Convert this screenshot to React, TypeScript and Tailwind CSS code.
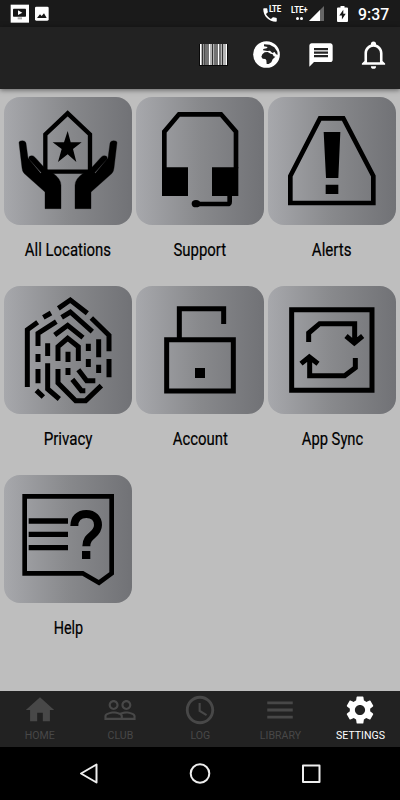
import type { ReactNode } from "react";
import { MdHome, MdPeopleOutline, MdAccessTime, MdMenu, MdSettings, MdMessage, MdPhone } from "react-icons/md";

type Tile = { label: string; fit: string; viewBox: string; art: ReactNode };

const tiles: Tile[] = [
  {
    label: "All Locations",
    fit: "scale-x-[0.83]",
    viewBox: "12 21 384 384",
    art: (
      <>
        <path d="M136 245V133L203 70L270 133V245Z" fill="none" stroke="#000" strokeWidth="13" />
        <path d="M203 123L212 157H245L219 177L229 216L203 193L174 216L185 177L158 157H192Z" />
        <path d="M57 158Q57 152 67 152Q77 152 78 160L84 204L122 250L124 248L87 207Q84 197 96 197Q101 197 106 203L136 236L161 251Q183 267 183 286V356H135V306L72 250Q67 244 66 234Z" stroke="#000" strokeWidth="1" />
        <path d="M351 158Q351 152 341 152Q331 152 330 160L324 204L286 250L284 248L321 207Q324 197 312 197Q307 197 302 203L272 236L248 251Q225 267 225 286V356H273V306L336 250Q341 244 342 234Z" stroke="#000" strokeWidth="1" />
      </>
    ),
  },
  {
    label: "Support",
    fit: "scale-x-[0.83]",
    viewBox: "12 21 384 384",
    art: (
      <>
        <path d="M97 235V125L141 73H267L312 125V235" fill="none" stroke="#000" strokeWidth="14" />
        <path d="M90 232H168V318H90ZM240 232H319V318H240Z" />
        <path d="M293 316V335Q293 342 286 342H192" fill="none" stroke="#000" strokeWidth="14" />
        <ellipse cx="192" cy="341" rx="13" ry="11" />
      </>
    ),
  },
  {
    label: "Alerts",
    fit: "scale-x-[0.84]",
    viewBox: "12 21 384 384",
    art: (
      <>
        <path d="M79 339V258L168 85H238L328 258V339Z" fill="none" stroke="#000" strokeWidth="14" />
        <path d="M179 126H229L223 264H186ZM185 284H223V312H185Z" />
      </>
    ),
  },
  {
    label: "Privacy",
    fit: "scale-x-[0.84]",
    viewBox: "12 18 384 384",
    art: (
      <g fill="none" stroke="#000" strokeWidth="15">
        <path d="M82 321V149L113 127M130 112L153 99M175 85L211 60L262 100" />
        <path d="M114 198V160L169 125M185 112L211 96L277 155M274 114L327 166V214M327 237V292" />
        <path d="M114 222V246M114 267V310M109 331L130 351M143 190V228M143 250V327L178 357" />
        <path d="M164 165L203 136L249 173M174 243V200L203 175L235 200V243" />
        <path d="M204 215V246M204 264V285M265 191V213M265 237V261M296 178V232M296 254V279" />
        <path d="M174 267V309L227 362H257L304 317M217 298L244 332H256M235 269L260 302H286" />
      </g>
    ),
  },
  {
    label: "Account",
    fit: "scale-x-[0.83]",
    viewBox: "12 18 384 384",
    art: (
      <>
        <path d="M104 179H304V333H104ZM142 179V86H275V132" fill="none" stroke="#000" strokeWidth="15" />
        <path d="M189 264H219V294H189Z" />
      </>
    ),
  },
  {
    label: "App Sync",
    fit: "scale-x-[0.82]",
    viewBox: "12 18 384 384",
    art: (
      <g fill="none" stroke="#000" strokeWidth="15">
        <path d="M83 89H324V331H83Z" />
        <path d="M134 186V159L167 131H272V186M246 168L271 189L296 168" />
        <path d="M274 234V263L242 287H137V233M111 251L136 231L162 251" />
      </g>
    ),
  },
  {
    label: "Help",
    fit: "scale-x-[0.80]",
    viewBox: "12 15 384 384",
    art: (
      <>
        <path d="M74 79H335V310L297 338L248 310H74Z" fill="none" stroke="#000" strokeWidth="14" />
        <path d="M86 153H204M86 193H204M86 233H204" stroke="#000" strokeWidth="16" />
        <path d="M223 168C223 145 237 132 259 132C281 132 294 146 294 165C294 197 259 193 259 229" fill="none" stroke="#000" strokeWidth="24" />
        <path d="M246 243H271V267H246Z" />
      </>
    ),
  },
];

const tabs = [
  { label: "HOME", Icon: MdHome },
  { label: "CLUB", Icon: MdPeopleOutline },
  { label: "LOG", Icon: MdAccessTime },
  { label: "LIBRARY", Icon: MdMenu },
  { label: "SETTINGS", Icon: MdSettings },
];

function StatusBar() {
  return (
    <div className="flex h-[27px] shrink-0 items-center bg-[#1a1a1a]">
      <svg className="ml-[10px] h-[20px] w-[40px]" viewBox="30 10 120 60">
        <rect x="32" y="12" width="55" height="54" fill="#fff" />
        <rect x="39" y="24" width="39" height="24" rx="2" fill="#161616" />
        <path d="M54 29L67 36L54 43Z" fill="#fff" />
        <rect x="53" y="50" width="13" height="6" fill="#aaa" />
        <rect x="105" y="18" width="41" height="42" rx="4" fill="#fff" />
        <path d="M111 52L120 41L125 46L132 38L140 52Z" fill="#161616" />
      </svg>
      <div className="ml-[211px] flex h-[27px] w-[22px] items-center">
        <div className="relative h-[17px] w-[22px] text-white">
          <MdPhone className="mt-[1px] size-[18px]" />
          <span className="absolute top-0 left-[7px] origin-left scale-x-[0.88] bg-[#1a1a1a] pl-px text-[9px] leading-[8px] font-bold tracking-[-0.2px]">LTE</span>
        </div>
      </div>
      <div className="ml-[7px] flex h-[16px] w-[19px] flex-col items-center text-white">
        <span className="scale-x-[0.88] text-[9px] leading-[9px] font-bold tracking-[-0.2px]">LTE+</span>
        <span className="mt-[2px] flex gap-[1.5px]">
          <i className="size-[3px] rounded-full bg-white" />
          <i className="size-[3px] rounded-full bg-white" />
        </span>
      </div>
      <svg className="size-[15px]" viewBox="0 0 15 15">
        <path d="M0 15L15 0V15Z" fill="#666" />
        <path d="M0 15L11 4V15Z" fill="#fff" />
      </svg>
      <svg className="ml-[13px] h-[16px] w-[11px]" viewBox="0 0 11 16">
        <path d="M3.5 0H7.5V1.5H10Q11 1.5 11 2.5V15Q11 16 10 16H1Q0 16 0 15V2.5Q0 1.5 1 1.5H3.5Z" fill="#fff" />
        <path d="M6.3 3.8L2.3 9.6H4.9V13.6L8.7 7.8H6.3Z" fill="#161616" />
      </svg>
      <span className="mt-[2px] ml-[10px] origin-left scale-x-[0.93] text-[17px] leading-none font-medium text-white">9:37</span>
    </div>
  );
}

function Header() {
  return (
    <header className="z-10 flex h-[62px] shrink-0 items-center bg-[#222] pb-[7px] text-white shadow-[0_1px_5px_rgba(0,0,0,0.5)]">
      <svg className="ml-[199px] h-[22px] w-[29px]" viewBox="0 0 29 22">
        <rect width="29" height="22" fill="#080808" />
        <rect x="1" width="27" height="21" fill="#b5b5b5" />
        <path d="M1.5 0V21M27.5 0V21M10.5 0V21M19.5 0V21" stroke="#fff" />
        <path d="M3.5 0V21M5.3 0V21M7 0V21M9 0V21M13.5 0V21M16 0V21M18 0V21M21 0V21M23.5 0V21" stroke="#222" strokeWidth=".9" />
      </svg>
      <svg className="ml-[25px] size-[27px]" viewBox="188 123 81 81">
        <circle cx="228.500" cy="163.500" r="40" fill="#fff" />
        <path d="M221 133L238 134L252 142L261 155L262 164L257 163L253 156L246 159L239 152L231 153L218 151L219 147L229 145L232 141L221 139Z" fill="#222" />
        <path d="M216 163L223 157L232 156L241 161L247 163L250 169L255 170L247 178L243 187L235 192L229 192L228 181L225 177L217 176L213 170Z" fill="#222" />
      </svg>
      <MdMessage className="ml-[27px] size-[28px]" />
      <svg className="ml-[23px] size-[31px]" viewBox="0 0 24 24" fill="currentColor">
        <path d="M10 21H14A2 2 0 0 1 12 23A2 2 0 0 1 10 21M21 19V20H3V19L5 17V11C5 7.9 7.03 5.17 10 4.29V4A2 2 0 0 1 14 4V4.29C16.97 5.17 19 7.9 19 11V17L21 19M17 11A5 5 0 0 0 7 11V18H17V11Z" />
      </svg>
    </header>
  );
}

export default function App() {
  return (
    <div className="flex h-[800px] w-[400px] flex-col overflow-hidden bg-[#bebebe] font-['Roboto','Liberation_Sans',sans-serif]">
      <StatusBar />
      <Header />
      <main className="grid flex-1 auto-rows-[189px] grid-cols-[repeat(3,128px)] content-start gap-x-[4px] pt-[8px] pl-[4px]">
        {tiles.map((t) => (
          <button key={t.label} className="flex flex-col items-center">
            <span className="block h-[127.500px] w-[128px] overflow-hidden rounded-[16px] bg-linear-to-r from-[#a7a8ac] via-[#88898c] to-[#717276]">
              <svg className="size-[128px]" viewBox={t.viewBox}>
                {t.art}
              </svg>
            </span>
            <span className={`mt-[13.500px] text-[18px] leading-[24px] whitespace-nowrap text-black [-webkit-text-stroke:0.2px_black] ${t.fit}`}>{t.label}</span>
          </button>
        ))}
      </main>
      <nav className="grid h-[56px] shrink-0 grid-cols-5 bg-[#222]">
        {tabs.map(({ label, Icon }) => (
          <div key={label} className={`flex flex-col items-center pt-[2px] ${label === "SETTINGS" ? "text-white" : "text-[#484848]"}`}>
            <Icon className="size-[34px]" />
            <span className="mt-[2px] scale-x-[0.96] text-[11px] leading-[14px]">{label}</span>
          </div>
        ))}
      </nav>
      <div className="flex h-[53px] shrink-0 items-center justify-center bg-black">
        <svg className="h-[24px] w-[244px]" viewBox="0 0 244 24" fill="none" stroke="#eee" strokeWidth="2" strokeLinejoin="round">
          <path d="M18.500 2.500V20.500L3 11.500Z" />
          <circle cx="122" cy="11.500" r="9.300" />
          <rect x="225" y="3.500" width="16.500" height="16.500" />
        </svg>
      </div>
    </div>
  );
}
